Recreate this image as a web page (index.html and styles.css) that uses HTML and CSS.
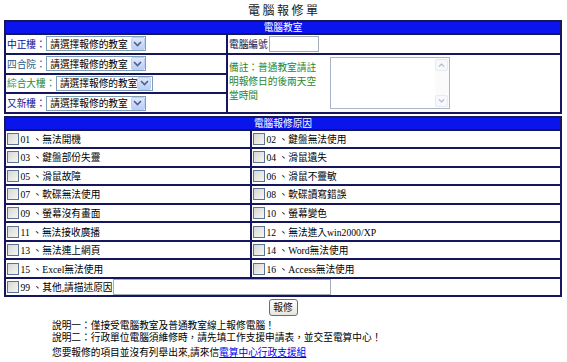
FILE: index.html
```html
<!DOCTYPE html>
<html lang="zh-Hant">
<head>
<meta charset="utf-8">
<title>電腦報修單</title>
<link rel="stylesheet" href="styles.css">
</head>
<body>
<div class="page">
  <h1 class="title">電腦報修單</h1>

  <table class="box t1">
    <tr><th colspan="2">電腦教室</th></tr>
    <tr>
      <td class="left">
        <div class="row"><span class="lbl c-blue">中正樓：</span>
          <span class="sel"><span class="sel-text">請選擇報修的教室</span><span class="sel-btn"><svg width="9" height="6" viewBox="0 0 9 6"><path d="M1 1 L4.5 4.5 L8 1" fill="none" stroke="#4d6185" stroke-width="1.6"/></svg></span></span>
        </div>
      </td>
      <td>
        <div class="row"><span class="lbl c-navy">電腦編號</span><span class="inp inp-no"></span></div>
      </td>
    </tr>
    <tr>
      <td class="left">
        <div class="row"><span class="lbl c-teal">四合院：</span>
          <span class="sel"><span class="sel-text">請選擇報修的教室</span><span class="sel-btn"><svg width="9" height="6" viewBox="0 0 9 6"><path d="M1 1 L4.5 4.5 L8 1" fill="none" stroke="#4d6185" stroke-width="1.6"/></svg></span></span>
        </div>
      </td>
      <td rowspan="3" class="note-cell">
        <div class="note">
          <div class="note-text">備註：普通教室請註明報修日的後兩天空堂時間</div>
          <div class="ta">
            <div class="ta-field"></div>
            <div class="ta-bar">
              <span class="sb-btn"><svg width="7" height="4" viewBox="0 0 7 4"><path d="M1 3.5 L3.5 1 L6 3.5" fill="none" stroke="#b3bccb" stroke-width="1.2"/></svg></span>
              <span class="sb-track"></span>
              <span class="sb-btn"><svg width="7" height="4" viewBox="0 0 7 4"><path d="M1 0.5 L3.5 3 L6 0.5" fill="none" stroke="#b3bccb" stroke-width="1.2"/></svg></span>
            </div>
          </div>
        </div>
      </td>
    </tr>
    <tr>
      <td class="left">
        <div class="row"><span class="lbl c-green">綜合大樓：</span>
          <span class="sel sel-wide"><span class="sel-text">請選擇報修的教室</span><span class="sel-btn"><svg width="9" height="6" viewBox="0 0 9 6"><path d="M1 1 L4.5 4.5 L8 1" fill="none" stroke="#4d6185" stroke-width="1.6"/></svg></span></span>
        </div>
      </td>
    </tr>
    <tr>
      <td class="left">
        <div class="row"><span class="lbl c-blue">又新樓：</span>
          <span class="sel"><span class="sel-text">請選擇報修的教室</span><span class="sel-btn"><svg width="9" height="6" viewBox="0 0 9 6"><path d="M1 1 L4.5 4.5 L8 1" fill="none" stroke="#4d6185" stroke-width="1.6"/></svg></span></span>
        </div>
      </td>
    </tr>
  </table>

  <table class="box t2">
    <tr><th colspan="2">電腦報修原因</th></tr>
    <tr><td class="c1"><div class="opt"><span class="cb"></span>01 、無法開機</div></td><td><div class="opt"><span class="cb"></span>02 、鍵盤無法使用</div></td></tr>
    <tr><td class="c1"><div class="opt"><span class="cb"></span>03 、鍵盤部份失靈</div></td><td><div class="opt"><span class="cb"></span>04 、滑鼠遺失</div></td></tr>
    <tr><td class="c1"><div class="opt"><span class="cb"></span>05 、滑鼠故障</div></td><td><div class="opt"><span class="cb"></span>06 、滑鼠不靈敏</div></td></tr>
    <tr><td class="c1"><div class="opt"><span class="cb"></span>07 、軟碟無法使用</div></td><td><div class="opt"><span class="cb"></span>08 、軟碟讀寫錯誤</div></td></tr>
    <tr><td class="c1"><div class="opt"><span class="cb"></span>09 、螢幕沒有畫面</div></td><td><div class="opt"><span class="cb"></span>10 、螢幕變色</div></td></tr>
    <tr><td class="c1"><div class="opt"><span class="cb"></span>11 、無法接收廣播</div></td><td><div class="opt"><span class="cb"></span>12 、無法進入win2000/XP</div></td></tr>
    <tr><td class="c1"><div class="opt"><span class="cb"></span>13 、無法連上網頁</div></td><td><div class="opt"><span class="cb"></span>14 、Word無法使用</div></td></tr>
    <tr><td class="c1"><div class="opt"><span class="cb"></span>15 、Excel無法使用</div></td><td><div class="opt"><span class="cb"></span>16 、Access無法使用</div></td></tr>
    <tr><td colspan="2"><div class="opt opt-other"><span class="cb"></span>99 、其他,請描述原因<span class="inp inp-other"></span></div></td></tr>
  </table>

  <div class="actions"><button class="btn" type="button">報修</button></div>

  <div class="notes">
    <p class="l">說明一：僅接受電腦教室及普通教室線上報修電腦！</p>
    <p class="l">說明二：行政單位電腦須維修時，請先填工作支援申請表，並交至電算中心！</p>
    <p class="l l3">您要報修的項目並沒有列舉出來,請來信<a href="#" class="link">電算中心行政支援組</a></p>
  </div>
</div>
</body>
</html>
```

FILE: styles.css
```css
body {
  margin: 0;
  background: #fff;
  color: #000;
  font-family: "Liberation Serif", "Noto Sans CJK TC", serif;
  font-size: 9.7px;
}

.page {
  width: 558px;
  padding: 0 4px;
}

.title {
  margin: 0;
  height: 20px;
  line-height: 19px;
  text-align: center;
  font-family: "Noto Sans CJK TC", sans-serif;
  font-size: 12px;
  font-weight: normal;
  letter-spacing: 2.5px;
  padding-left: 2.5px;
  color: #1a1a1a;
}

.box {
  width: 558px;
  border-collapse: collapse;
}

.box th,
.box td {
  border: 2px solid #16165e;
  padding: 0;
}

.box th {
  background: #0a14ec;
  color: #fff;
  font-weight: normal;
  height: 11px;
  line-height: 11px;
  font-size: 9.7px;
}

/* table 1 */
.t1 .left {
  width: 220px;
}

.row {
  display: flex;
  align-items: center;
  height: 17.75px;
  padding-left: 1px;
}

.lbl {
  white-space: nowrap;
}

.c-blue { color: #1010a0; }
.c-teal { color: #225c8c; }
.c-green { color: #2f8a2f; }
.c-navy { color: #10104a; }

.sel {
  display: inline-flex;
  align-items: center;
  box-sizing: border-box;
  width: 100px;
  height: 15px;
  border: 1px solid #7f9db9;
  background: #fff;
  margin-left: 0.5px;
}

.sel-wide {
  width: 97px;
}

.sel-text {
  flex: 1;
  padding-left: 3px;
  white-space: nowrap;
}

.sel-btn {
  display: flex;
  align-items: center;
  justify-content: center;
  flex: none;
  box-sizing: border-box;
  width: 14px;
  height: 13px;
  margin-right: 0.5px;
  border: 1px solid #bccff8;
  border-radius: 2px;
  background: linear-gradient(#dfe8fd, #b9cdf7);
}

.inp {
  display: inline-block;
  box-sizing: border-box;
  border: 1px solid #a3adb8;
  background: #fff;
}

.inp-no {
  width: 50px;
  height: 16px;
  margin-left: 1px;
}

.note-cell {
  vertical-align: middle;
}

.note {
  display: flex;
  align-items: center;
  padding-left: 1px;
}

.note-text {
  width: 89px;
  margin-right: 10px;
  line-height: 14px;
  color: #2a862a;
  margin-top: -3px;
}

.ta {
  display: flex;
  box-sizing: border-box;
  width: 120px;
  height: 52px;
  margin-left: 2px;
  border: 1px solid #a8b6c9;
  background: #fff;
}

.ta-field {
  flex: 1;
}

.ta-bar {
  display: flex;
  flex-direction: column;
  width: 13px;
  padding: 1px 1px 1px 0;
  background: #fbfbfc;
}

.sb-btn {
  display: flex;
  align-items: center;
  justify-content: center;
  box-sizing: border-box;
  height: 12px;
  border: 1px solid #e6eaf2;
  border-radius: 2px;
  background: #f6f8fc;
}

.sb-track {
  flex: 1;
}

/* table 2 */
.t2 {
  margin-top: 1.5px;
}

.t2 .c1 {
  width: 244px;
}

.opt {
  display: flex;
  align-items: center;
  height: 16.55px;
  padding-left: 1px;
  white-space: nowrap;
}

.cb {
  display: inline-block;
  box-sizing: border-box;
  width: 12px;
  height: 12px;
  margin-right: 1.5px;
  border: 1px solid #5d7396;
  background: linear-gradient(135deg, #d8d8d2, #f6f6f4);
}

.inp-other {
  width: 218px;
  height: 16px;
  margin-left: 0;
}

/* actions */
.actions {
  display: flex;
  justify-content: center;
  padding-top: 2px;
}

.btn {
  box-sizing: border-box;
  width: 29px;
  height: 17px;
  padding: 0;
  border: 1px solid #6c6c6c;
  border-radius: 3px;
  background: linear-gradient(#ffffff, #e8e6dc);
  font-family: "Noto Sans CJK TC", sans-serif;
  font-size: 9.7px;
  line-height: 15px;
  color: #111;
}

/* notes */
.notes {
  padding-left: 48px;
  padding-top: 4px;
}

.l {
  margin: 0;
  line-height: 11.5px;
  white-space: nowrap;
}

.l3 {
  margin-top: 4px;
}

.link {
  color: #0000ee;
  text-decoration: underline;
}
```
